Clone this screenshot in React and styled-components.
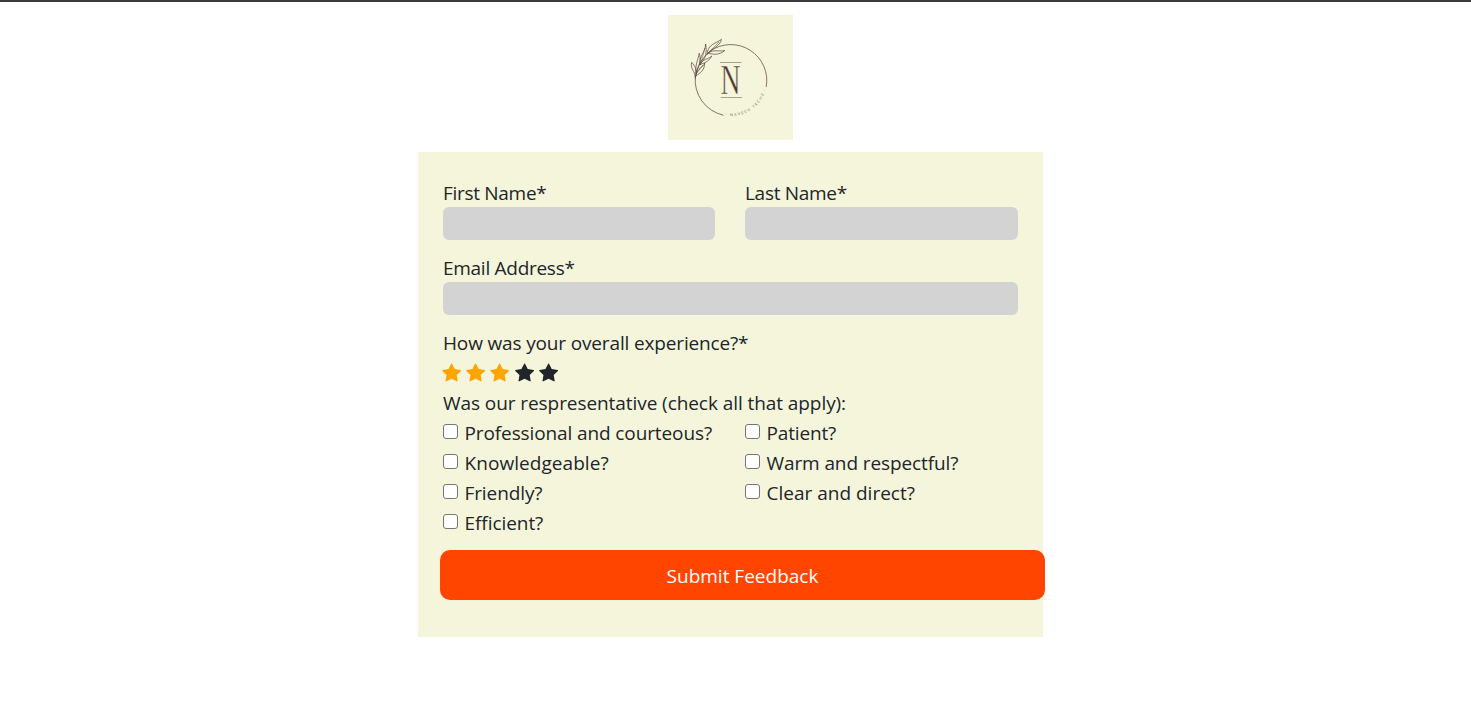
import React, { useState } from "react";
import styled, { createGlobalStyle } from "styled-components";

const GlobalStyle = createGlobalStyle`
  *, *::before, *::after { box-sizing: border-box; }
  body {
    margin: 0;
    background: #fff;
    color: #212529;
    font-family: "Open Sans", "Noto Sans", sans-serif;
    font-size: 19px;
    line-height: 30px;
  }
`;

const Page = styled.main`
  display: flex;
  flex-direction: column;
  align-items: center;
  border-top: 2px solid #3b3b3b;
  padding: 13px 10px 0 0;
`;

const Logo = styled.svg`
  display: block;
  width: 125px;
  height: 125px;
  margin-bottom: 12px;
  background: #f5f5dc;
`;

const Form = styled.form`
  width: 625px;
  height: 485px;
  padding: 25px;
  background: #f5f5dc;
`;

const Columns = styled.div`
  display: grid;
  grid-template-columns: 272px 273px;
  column-gap: 30px;
`;

const Field = styled.label`
  display: block;
  margin-bottom: 12px;
`;

const Text = styled.span`
  display: block;
  height: 30px;
  padding-top: 1px;
  white-space: nowrap;
  letter-spacing: ${(p) => p.$tracking || 0}px;
`;

const Input = styled.input`
  display: block;
  width: 100%;
  height: 33px;
  padding: 0 8px;
  border: 0;
  border-radius: 6px;
  background: #d3d3d3;
  font: inherit;
`;

const Stars = styled.div`
  display: flex;
  gap: 5px;
  height: 30px;
  padding-top: 6px;
  margin-left: -1px;
`;

const Star = styled.svg`
  width: 19.2px;
  height: 19px;
  fill: ${(p) => (p.$on ? "#ffa500" : "#212529")};
  cursor: pointer;
`;

const Option = styled.label`
  display: flex;
  gap: 6.5px;
  height: 30px;
`;

const Checkbox = styled.input`
  appearance: none;
  flex: none;
  width: 15px;
  height: 15px;
  margin: 7px 0 0;
  border: 1px solid #767676;
  border-radius: 3px;
  background: #fff;
  &:checked { background: #0075ff; }
`;

const Submit = styled.button`
  display: block;
  width: 605px;
  height: 50px;
  margin: 13px 0 0 -3px;
  padding: 2px 0 0;
  border: 0;
  border-radius: 10px;
  background: #ff4500;
  color: #fff;
  font: inherit;
`;

const leftOptions = [
  ["Professional and courteous?", -0.11],
  ["Knowledgeable?", 0.06],
  ["Friendly?", -0.1],
  ["Efficient?", -0.06],
];
const rightOptions = [
  ["Patient?", -0.15],
  ["Warm and respectful?", -0.1],
  ["Clear and direct?", 0],
];

function BrandLogo() {
  return (
    <Logo viewBox="0 0 125 125">
      <g fill="none" stroke="#5d4b42" strokeWidth="0.75">
        <path d="M42 36.2A36 36 0 0 1 98.2 72" />
        <path d="M27.4 61A36 36 0 0 0 55.5 100.2" />
        <path d="M27.3 64C28 54 32 45 42 36.5" />
        <path d="M27.2 62C27 56 22 54 23.7 47.3C27 51 29.5 55 27.2 62Z" />
        <path d="M28 58C27 50 30 45 31.2 38.3C33.5 45 31 52 28 58Z" />
        <path d="M28 61C29 53 35 53 36.7 48C36.5 56 32 57.5 28 61Z" />
        <path d="M32 50C31 41 37 38 37.7 29C39 38 38 43 32 49Z" />
        <path d="M32 50C35 43 40 45 43.7 41C40 48 36 47 32 50Z" />
        <path d="M39 39.5C40 29 47 29 53.5 24.4C52 31.5 44 33 39 39.5Z" />
        <path d="M40 38C46 34 50 37 56.8 35.5C51 40.5 45 39.5 40 38Z" />
        <path d="M28 59L35 50M33 47L37 33M41 37L51 27" strokeWidth="0.5" />
      </g>
      <g stroke="#a5a28e" strokeWidth="1">
        <path d="M52 47.5H73.5M52.7 82.5H74" />
      </g>
      <text x="52.6" y="79" fill="#4b382f" stroke="#f5f5dc" strokeWidth="0.5" fontFamily="Liberation Serif, serif" fontSize="42" textLength="20" lengthAdjust="spacingAndGlyphs">N</text>
      <path id="logo-arc" d="M57.4 100.6A36 36 0 0 0 98.6 70" fill="none" />
      <text fill="#77705f" fontFamily="Lato, sans-serif" fontSize="3.7">
        <textPath href="#logo-arc" textLength="52">· NAVEEN YECHZ ·</textPath>
      </text>
    </Logo>
  );
}

function Options({ items }) {
  return (
    <div>
      {items.map(([label, tracking]) => (
        <Option key={label}>
          <Checkbox type="checkbox" />
          <Text $tracking={tracking}>{label}</Text>
        </Option>
      ))}
    </div>
  );
}

export default function App() {
  const [rating, setRating] = useState(3);
  return (
    <Page>
      <GlobalStyle />
      <BrandLogo />
      <Form onSubmit={(e) => e.preventDefault()}>
        <Columns>
          <Field>
            <Text $tracking={-0.3}>First Name*</Text>
            <Input />
          </Field>
          <Field>
            <Text $tracking={-0.3}>Last Name*</Text>
            <Input />
          </Field>
        </Columns>
        <Field>
          <Text $tracking={-0.28}>Email Address*</Text>
          <Input type="email" />
        </Field>
        <Text $tracking={-0.15}>How was your overall experience?*</Text>
        <Stars>
          {[1, 2, 3, 4, 5].map((n) => (
            <Star key={n} viewBox="0 0 16 16" $on={n <= rating} onClick={() => setRating(n)}>
              <path d="M3.612 15.443c-.386.198-.824-.149-.746-.592l.83-4.73L.173 6.765c-.329-.314-.158-.888.283-.95l4.898-.696L7.538.792c.197-.39.73-.39.927 0l2.184 4.327 4.898.696c.441.062.612.636.282.95l-3.522 3.356.83 4.73c.078.443-.36.79-.746.592L8 13.187l-4.389 2.256z" />
            </Star>
          ))}
        </Stars>
        <Text $tracking={-0.07}>Was our respresentative (check all that apply):</Text>
        <Columns>
          <Options items={leftOptions} />
          <Options items={rightOptions} />
        </Columns>
        <Submit type="submit">Submit Feedback</Submit>
      </Form>
    </Page>
  );
}
